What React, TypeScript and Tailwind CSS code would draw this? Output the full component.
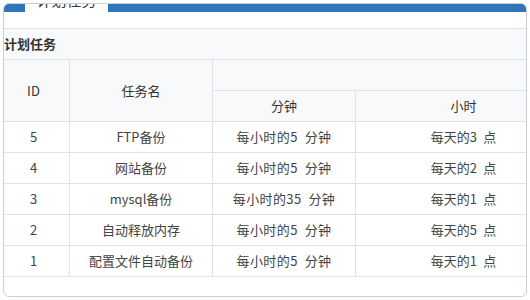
const rows = [
  { id: 5, name: 'FTP备份', min: '每小时的5\u2002分钟', hour: '每天的3\u2002点' },
  { id: 4, name: '网站备份', min: '每小时的5\u2002分钟', hour: '每天的2\u2002点' },
  { id: 3, name: 'mysql备份', min: '每小时的35\u2002分钟', hour: '每天的1\u2002点' },
  { id: 2, name: '自动释放内存', min: '每小时的5\u2002分钟', hour: '每天的5\u2002点' },
  { id: 1, name: '配置文件自动备份', min: '每小时的5\u2002分钟', hour: '每天的1\u2002点' },
];

const cell = 'flex items-center justify-center border-r border-b border-[#dfe2e7]';

export default function App() {
  return (
    <div
      className="h-[300px] w-[530px] bg-white p-[3px] text-[13px] text-[#444]"
      style={{ fontFamily: '"Noto Sans CJK SC", "Noto Sans", sans-serif' }}
    >
      <div className="flex h-[294px] flex-col overflow-hidden rounded-[6px] border border-[#c9ced7] bg-white">
        {/* Top bar with tab */}
        <div className="flex h-[8px] shrink-0 bg-[#2e76b7]">
          <div className="ml-[21px] h-full w-[83px] overflow-hidden bg-white">
            <div className="-mt-[13px] text-center text-[15px] leading-[18px] text-[#333]">
              计划任务
            </div>
          </div>
        </div>
        <div className="h-[17px] shrink-0 border-b border-[#dfe2e7]" />

        {/* Section title */}
        <div className="flex h-[31px] shrink-0 items-center border-b border-[#dfe2e7] bg-[#f8f9fa] text-[13px] font-bold text-[#333]">
          计划任务
        </div>

        {/* Table header */}
        <div className="grid w-[568px] grid-cols-[66px_143px_143px_216px] grid-rows-[31px_31px] bg-[#f8f9fa] text-[#333]">
          <div className={`${cell} row-span-2 pr-[6px]`}>ID</div>
          <div className={`${cell} row-span-2`}>任务名</div>
          <div className={`${cell} col-span-2`} />
          <div className={cell}>分钟</div>
          <div className={cell}>小时</div>
        </div>

        {/* Table body */}
        <div className="grid w-[568px] grid-cols-[66px_143px_143px_216px] auto-rows-[31px] bg-white">
          {rows.map((r) => (
            <div key={r.id} className="contents">
              <div className={`${cell} pr-[6px]`}>{r.id}</div>
              <div className={cell}>{r.name}</div>
              <div className={`${cell} tracking-[0.4px]`}>{r.min}</div>
              <div className={cell}>{r.hour}</div>
            </div>
          ))}
        </div>
      </div>
    </div>
  );
}
